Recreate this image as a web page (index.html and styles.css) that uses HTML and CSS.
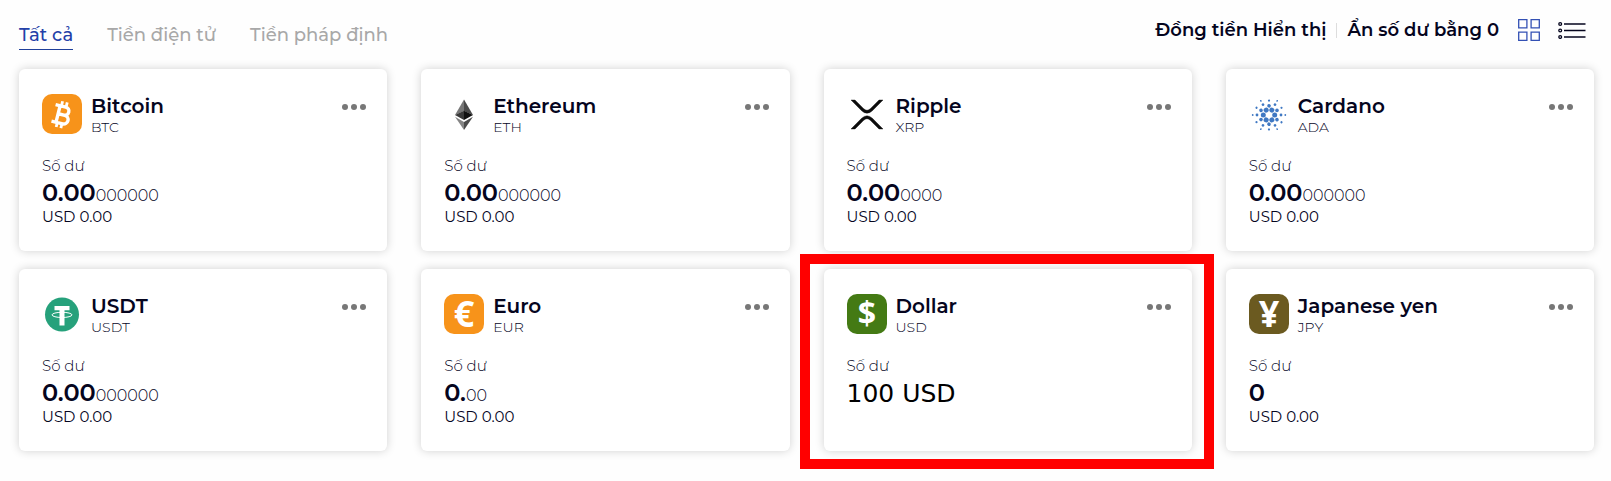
FILE: index.html
```
<!DOCTYPE html>
<html lang="vi">
<head>
<meta charset="utf-8">
<meta name="viewport" content="width=device-width, initial-scale=1">
<title>Ví</title>
<link rel="stylesheet" href="styles.css">
</head>
<body>
<svg class="defs" aria-hidden="true">
  <symbol id="dots" viewBox="0 0 24 8"><circle cx="3" cy="4" r="3"/><circle cx="12" cy="4" r="3"/><circle cx="21" cy="4" r="3"/></symbol>
</svg>
<header class="topbar">
  <nav class="tabs">
    <button class="tab tab-active" type="button">Tất cả</button>
    <button class="tab" type="button">Tiền điện tử</button>
    <button class="tab" type="button">Tiền pháp định</button>
  </nav>
  <div class="tools">
    <button class="tool" type="button">Đồng tiền Hiển thị</button>
    <span class="divider"></span>
    <button class="tool" type="button">Ẩn số dư bằng 0</button>
    <button class="view view-grid" type="button" aria-label="Grid">
      <svg width="22" height="22" viewBox="0 0 22 22" fill="none" stroke="#3350b4" stroke-width="1.3"><path d="M.7.7h8.2v8.2H.7zM13.1.7h8.2v8.2h-8.2zM.7 13.1h8.2v8.2H.7zM13.1 13.1h8.2v8.2h-8.2z"/></svg>
    </button>
    <button class="view view-list" type="button" aria-label="List">
      <svg width="28" height="18" viewBox="0 0 28 18" fill="none" stroke="#05051e" stroke-width="1.3"><circle cx="2.2" cy="3" r="1.4"/><circle cx="2.2" cy="9.5" r="1.4"/><circle cx="2.2" cy="16" r="1.4"/><path d="M6 3h21.500M6 9.500h21.500M6 16h21.500"/></svg>
    </button>
  </div>
</header>
<main class="wallets">
  <article class="card">
    <div class="head">
      <svg class="coin" viewBox="0 0 40 40"><rect width="40" height="40" rx="10" fill="#f7931a"/><g transform="rotate(14 20 20)" fill="none" stroke="#fff" stroke-width="3.4"><path d="M11.5 12.400H22a4.100 4.100 0 0 1 0 8.200H16.500M16.500 20.600H23a4.400 4.400 0 0 1 0 8.800H11.500M16.200 12.400V29.400"/><path stroke-width="2.800" d="M17.500 7.500v4M22.300 7.500v4M17.500 30v4M22.300 30v4"/></g></svg>
      <div class="title"><h2 class="name">Bitcoin</h2><p class="code">BTC</p></div>
      <button class="more" type="button" aria-label="Bitcoin menu"><svg width="24" height="8"><use href="#dots"/></svg></button>
    </div>
    <p class="label">Số dư</p>
    <p class="amount">0.00<span class="tail">000000</span></p>
    <p class="fiat">USD 0.00</p>
  </article>
  <article class="card">
    <div class="head">
      <svg class="coin" viewBox="0 0 40 40"><path fill="#777" d="M20 5.500 11 21l9-4z"/><path fill="#4a4a4a" d="m20 5.500 9 15.500-9-4z"/><path fill="#393939" d="m11 21 9-4.200V26z"/><path fill="#111" d="m29 21-9-4.200V26z"/><path fill="#858585" d="m11 22.800 9 5.200v8z"/><path fill="#4b4b4b" d="m29 22.800-9 5.200v8z"/></svg>
      <div class="title"><h2 class="name">Ethereum</h2><p class="code">ETH</p></div>
      <button class="more" type="button" aria-label="Ethereum menu"><svg width="24" height="8"><use href="#dots"/></svg></button>
    </div>
    <p class="label">Số dư</p>
    <p class="amount">0.00<span class="tail">000000</span></p>
    <p class="fiat">USD 0.00</p>
  </article>
  <article class="card">
    <div class="head">
      <svg class="coin" viewBox="0 0 40 40"><path fill="#0c0c0c" stroke="#0c0c0c" stroke-width=".4" d="M4 6h4l8.500 8.600q3.500 3.300 7 0L32 6h4L25.400 16.700q-5.400 5-10.800 0zM4 35h4l8.500-8.600q3.500-3.300 7 0L32 35h4L25.400 24.300q-5.400-5-10.800 0z"/></svg>
      <div class="title"><h2 class="name">Ripple</h2><p class="code">XRP</p></div>
      <button class="more" type="button" aria-label="Ripple menu"><svg width="24" height="8"><use href="#dots"/></svg></button>
    </div>
    <p class="label">Số dư</p>
    <p class="amount">0.00<span class="tail">0000</span></p>
    <p class="fiat">USD 0.00</p>
  </article>
  <article class="card">
    <div class="head">
      <svg class="coin" viewBox="0 0 40 40" fill="#3f78c3">
        <g id="ray"><circle cx="25.700" cy="21" r="2.500"/><circle cx="28" cy="16.400" r="1.800"/><circle cx="32" cy="21" r="1.400"/><circle cx="32.500" cy="13.800" r="1.100"/><circle cx="36.300" cy="21" r=".9"/></g>
        <use href="#ray" transform="rotate(60 20 21)"/><use href="#ray" transform="rotate(120 20 21)"/><use href="#ray" transform="rotate(180 20 21)"/><use href="#ray" transform="rotate(240 20 21)"/><use href="#ray" transform="rotate(300 20 21)"/>
      </svg>
      <div class="title"><h2 class="name">Cardano</h2><p class="code">ADA</p></div>
      <button class="more" type="button" aria-label="Cardano menu"><svg width="24" height="8"><use href="#dots"/></svg></button>
    </div>
    <p class="label">Số dư</p>
    <p class="amount">0.00<span class="tail">000000</span></p>
    <p class="fiat">USD 0.00</p>
  </article>
  <article class="card">
    <div class="head">
      <svg class="coin" viewBox="0 0 40 40"><circle cx="20" cy="20.500" r="17" fill="#26a17b"/><path fill="#fff" d="M12.500 12h15v4.300h-5V31.500h-5V16.300h-5z"/><ellipse cx="20" cy="20.900" rx="10" ry="2.600" fill="none" stroke="#fff"/></svg>
      <div class="title"><h2 class="name">USDT</h2><p class="code">USDT</p></div>
      <button class="more" type="button" aria-label="USDT menu"><svg width="24" height="8"><use href="#dots"/></svg></button>
    </div>
    <p class="label">Số dư</p>
    <p class="amount">0.00<span class="tail">000000</span></p>
    <p class="fiat">USD 0.00</p>
  </article>
  <article class="card">
    <div class="head">
      <svg class="coin" viewBox="0 0 40 40"><rect width="40" height="40" rx="10" fill="#f7931a"/><text class="sign" x="20" y="33">€</text></svg>
      <div class="title"><h2 class="name">Euro</h2><p class="code">EUR</p></div>
      <button class="more" type="button" aria-label="Euro menu"><svg width="24" height="8"><use href="#dots"/></svg></button>
    </div>
    <p class="label">Số dư</p>
    <p class="amount">0.<span class="tail">00</span></p>
    <p class="fiat">USD 0.00</p>
  </article>
  <article class="card card-marked">
    <div class="head">
      <svg class="coin" viewBox="0 0 40 40"><rect width="40" height="40" rx="10" fill="#447a14"/><text class="sign sign-small" x="20" y="31">$</text></svg>
      <div class="title"><h2 class="name">Dollar</h2><p class="code">USD</p></div>
      <button class="more" type="button" aria-label="Dollar menu"><svg width="24" height="8"><use href="#dots"/></svg></button>
    </div>
    <p class="label">Số dư</p>
    <p class="amount amount-plain">100 USD</p>
  </article>
  <article class="card">
    <div class="head">
      <svg class="coin" viewBox="0 0 40 40"><rect width="40" height="40" rx="10" fill="#6b5a20"/><text class="sign" x="20" y="33">¥</text></svg>
      <div class="title"><h2 class="name">Japanese yen</h2><p class="code">JPY</p></div>
      <button class="more" type="button" aria-label="Japanese yen menu"><svg width="24" height="8"><use href="#dots"/></svg></button>
    </div>
    <p class="label">Số dư</p>
    <p class="amount">0</p>
    <p class="fiat">USD 0.00</p>
  </article>
</main>
</body>
</html>
```
FILE: styles.css
```
* { box-sizing: border-box; }
body {
  margin: 0;
  padding: 18px 17px 28px 19px;
  background: #fefefe;
  color: #05051e;
  font-family: Montserrat, Inter, "Noto Sans", sans-serif;
}
h2, p { margin: 0; }
button {
  padding: 0;
  border: 0;
  background: none;
  color: inherit;
  font: inherit;
  cursor: pointer;
}
svg { display: block; }
.defs { position: absolute; width: 0; height: 0; }

.topbar {
  display: flex;
  justify-content: space-between;
  align-items: flex-start;
  margin-bottom: 19px;
}
.tabs { display: flex; gap: 34px; }
.tab {
  height: 32px;
  padding-top: 3px;
  border-bottom: 1px solid transparent;
  color: #a8a8a8;
  font-size: 18px;
  font-weight: 500;
  line-height: 28px;
}
.tab-active { border-color: #1f3f9a; color: #2440a8; }
.tools {
  display: flex;
  align-items: center;
  padding-right: 8px;
  line-height: 24px;
}
.tool { font-size: 18px; font-weight: 600; }
.divider { width: 1px; height: 15px; margin: 0 10px; background: #ddd; }
.view-grid { margin-left: 19px; }
.view-list { margin-left: 18px; }

.wallets {
  display: grid;
  grid-template-columns: repeat(4, 1fr);
  gap: 18px 34px;
}
.card {
  position: relative;
  padding: 25px 21px 25px 23px;
  border-radius: 6px;
  background: #fff;
  box-shadow: 0 0 10px rgba(0, 0, 0, 0.18);
}
.card-marked::after {
  content: "";
  position: absolute;
  inset: -15px -22px -18px -24px;
  border: 10px solid #f00;
  pointer-events: none;
}
.head {
  display: flex;
  align-items: flex-start;
  height: 40px;
  margin-bottom: 22px;
}
.coin { width: 40px; height: 40px; margin-right: 9px; overflow: visible; }
.sign {
  fill: #fff;
  font-family: "Open Sans", "Noto Sans", sans-serif;
  font-size: 36px;
  font-weight: 700;
  text-anchor: middle;
}
.sign-small { font-size: 32px; }
.title { flex: 1; }
.name { font-size: 20px; font-weight: 600; line-height: 24px; }
.code { font-size: 14px; font-weight: 300; line-height: 18px; }
.more { margin-top: 9px; fill: #777; }
.label { margin-bottom: 3px; font-size: 15px; font-weight: 300; line-height: 20px; }
.amount { font-size: 24px; font-weight: 600; line-height: 28px; }
.tail { font-size: 16px; font-weight: 300; line-height: 1; }
.amount-plain {
  color: #000;
  font-family: "DejaVu Sans", sans-serif;
  font-size: 25px;
  font-weight: 400;
  line-height: 30px;
}
.fiat { font-size: 15px; line-height: 19px; }
```
